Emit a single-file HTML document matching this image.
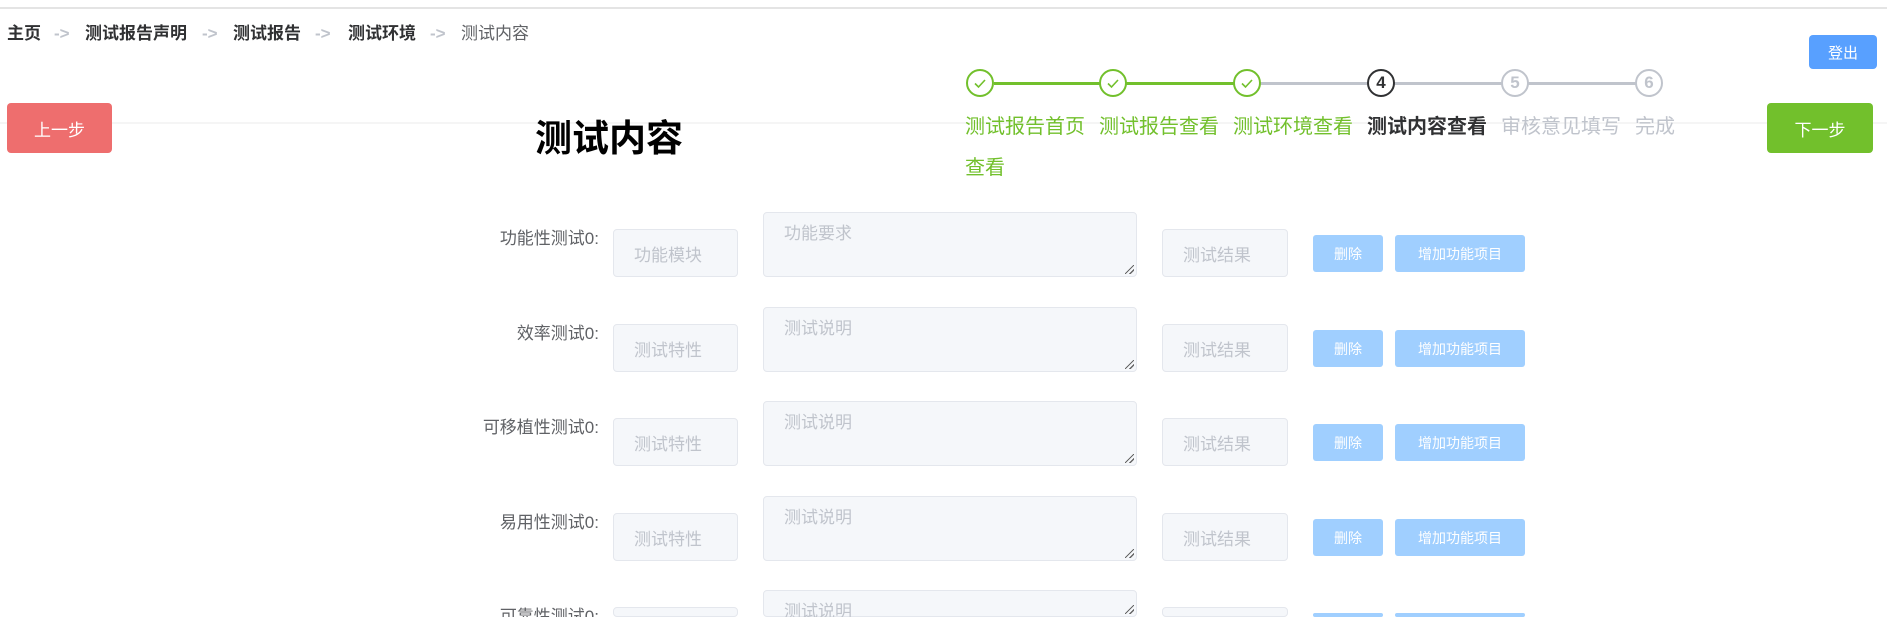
<!DOCTYPE html>
<html style="overflow:hidden"><head><meta charset="utf-8"><style>
*{margin:0;padding:0;box-sizing:border-box}
html,body{width:1887px;height:617px;overflow:hidden}
body{background:#fff;font-family:"Liberation Sans","Noto Sans CJK SC",sans-serif}
#w{position:relative;width:1887px;height:617px;overflow:hidden}
.a{position:absolute;white-space:nowrap}
.bc{top:19px;font-size:17px;color:#303133;font-weight:bold}
.ar{color:#c0c4cc;font-weight:bold;top:24px}
.btn{position:absolute;color:#fff;border-radius:4px;display:flex;align-items:center;justify-content:center}
.c{position:absolute;width:28px;height:28px;border-radius:50%;border:2px solid;background:#fff;display:flex;align-items:center;justify-content:center;font-size:17px;font-weight:bold}
.g{border-color:#72c02c;color:#72c02c}
.ln{position:absolute;height:3px;top:82px}
.lb{position:absolute;top:110px;font-size:20px}
.inp{position:absolute;background:#f5f7fa;border:1px solid #e4e7ed;border-radius:4px;color:#c0c4cc;font-size:17px;padding-left:20px;display:flex;align-items:center}
.ta{align-items:flex-start;padding-top:6px}
.ta::after{content:"";position:absolute;right:2px;bottom:2px;width:9px;height:9px;background:linear-gradient(135deg,transparent 45%,#666 45%,#666 55%,transparent 55%,transparent 72%,#666 72%,#666 82%,transparent 82%)}
.lab{position:absolute;font-size:17px;color:#606266;text-align:right;width:300px;left:299px}
.sb{position:absolute;background:#a0cfff;color:#fff;border-radius:3px;font-size:14px;display:flex;align-items:center;justify-content:center}
</style></head><body><div id="w">
<div class="a" style="left:0;top:7px;width:1887px;height:2px;background:#e4e4e4"></div>
<div class="a" style="left:0;top:122px;width:1887px;height:2px;background:#f5f5f5"></div>
<div class="a bc" style="left:7px">主页</div>
<div class="a bc ar" style="left:54px">-&gt;</div>
<div class="a bc" style="left:85px">测试报告声明</div>
<div class="a bc ar" style="left:202px">-&gt;</div>
<div class="a bc" style="left:233px">测试报告</div>
<div class="a bc ar" style="left:315px">-&gt;</div>
<div class="a bc" style="left:348px">测试环境</div>
<div class="a bc ar" style="left:430px">-&gt;</div>
<div class="a bc" style="left:461px;font-weight:normal;color:#606266">测试内容</div>
<div class="btn" style="left:1809px;top:35px;width:68px;height:34px;background:#58a0ff;font-size:15px">登出</div>
<div class="btn" style="left:7px;top:103px;width:105px;height:50px;background:#ee6e6e;font-size:17px">上一步</div>
<div class="btn" style="left:1767px;top:103px;width:106px;height:50px;background:#72c02c;font-size:17px">下一步</div>
<div class="a" style="left:535px;top:108px;font-size:37px;font-weight:bold;color:#000">测试内容</div>
<div class="ln" style="left:994px;width:655px;background:#c0c4cc"></div>
<div class="ln" style="left:994px;width:254px;background:#72c02c"></div>
<div class="c g" style="left:966px;top:69px"><svg width="16" height="16" viewBox="0 0 16 16"><path d="M3 8.5l3.5 3.5L13 5" fill="none" stroke="#72c02c" stroke-width="1.6"/></svg></div>
<div class="c g" style="left:1099px;top:69px"><svg width="16" height="16" viewBox="0 0 16 16"><path d="M3 8.5l3.5 3.5L13 5" fill="none" stroke="#72c02c" stroke-width="1.6"/></svg></div>
<div class="c g" style="left:1233px;top:69px"><svg width="16" height="16" viewBox="0 0 16 16"><path d="M3 8.5l3.5 3.5L13 5" fill="none" stroke="#72c02c" stroke-width="1.6"/></svg></div>
<div class="c" style="left:1367px;top:69px;border-color:#303133;color:#303133">4</div>
<div class="c" style="left:1501px;top:69px;border-color:#c0c4cc;color:#c0c4cc">5</div>
<div class="c" style="left:1635px;top:69px;border-color:#c0c4cc;color:#c0c4cc">6</div>
<div class="lb" style="left:965px;color:#72c02c">测试报告首页<br><span style="line-height:58px">查看</span></div>
<div class="lb" style="left:1099px;color:#72c02c">测试报告查看</div>
<div class="lb" style="left:1233px;color:#72c02c">测试环境查看</div>
<div class="lb" style="left:1367px;color:#303133;font-weight:bold">测试内容查看</div>
<div class="lb" style="left:1501px;color:#c0c4cc">审核意见填写</div>
<div class="lb" style="left:1635px;color:#c0c4cc">完成</div>

<div class="lab" style="top:224px">功能性测试0:</div>
<div class="inp" style="left:613px;top:229px;width:125px;height:48px">功能模块</div>
<div class="inp ta" style="left:763px;top:212px;width:374px;height:65px">功能要求</div>
<div class="inp" style="left:1162px;top:229px;width:126px;height:48px">测试结果</div>
<div class="sb" style="left:1313px;top:235px;width:70px;height:37px">删除</div>
<div class="sb" style="left:1395px;top:235px;width:130px;height:37px">增加功能项目</div>

<div class="lab" style="top:319px">效率测试0:</div>
<div class="inp" style="left:613px;top:324px;width:125px;height:48px">测试特性</div>
<div class="inp ta" style="left:763px;top:307px;width:374px;height:65px">测试说明</div>
<div class="inp" style="left:1162px;top:324px;width:126px;height:48px">测试结果</div>
<div class="sb" style="left:1313px;top:330px;width:70px;height:37px">删除</div>
<div class="sb" style="left:1395px;top:330px;width:130px;height:37px">增加功能项目</div>

<div class="lab" style="top:413px">可移植性测试0:</div>
<div class="inp" style="left:613px;top:418px;width:125px;height:48px">测试特性</div>
<div class="inp ta" style="left:763px;top:401px;width:374px;height:65px">测试说明</div>
<div class="inp" style="left:1162px;top:418px;width:126px;height:48px">测试结果</div>
<div class="sb" style="left:1313px;top:424px;width:70px;height:37px">删除</div>
<div class="sb" style="left:1395px;top:424px;width:130px;height:37px">增加功能项目</div>

<div class="lab" style="top:508px">易用性测试0:</div>
<div class="inp" style="left:613px;top:513px;width:125px;height:48px">测试特性</div>
<div class="inp ta" style="left:763px;top:496px;width:374px;height:65px">测试说明</div>
<div class="inp" style="left:1162px;top:513px;width:126px;height:48px">测试结果</div>
<div class="sb" style="left:1313px;top:519px;width:70px;height:37px">删除</div>
<div class="sb" style="left:1395px;top:519px;width:130px;height:37px">增加功能项目</div>

<div class="lab" style="top:602px">可靠性测试0:</div>
<div class="inp" style="left:613px;top:607px;width:125px;height:10px"></div>
<div class="inp ta" style="left:763px;top:590px;width:374px;height:27px">测试说明</div>
<div class="inp" style="left:1162px;top:607px;width:126px;height:10px"></div>
<div class="sb" style="left:1313px;top:613px;width:70px;height:4px"></div>
<div class="sb" style="left:1395px;top:613px;width:130px;height:4px"></div>
</div></body></html>
